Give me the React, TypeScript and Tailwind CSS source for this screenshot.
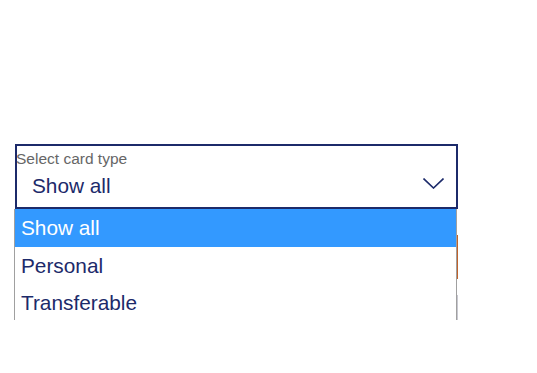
export default function App() {
  const options = ["Show all", "Personal", "Transferable"];
  return (
    <div
      className="w-[537px] h-[373px] bg-white pt-[144px] pl-[14px]"
      style={{ fontFamily: '"Liberation Sans", Arial, sans-serif' }}
    >
      <div className="relative w-[444px]">
        {/* Select box */}
        <div className="ml-[1px] w-[443px] h-[65px] border-2 border-[#1c2a6a] flex flex-col">
          <span className="ml-[-1px] mt-[4px] text-[15.5px] leading-[18px] text-[#666666]">
            Select card type
          </span>
          <div className="flex items-center justify-between pl-[15px] pr-[12px] mt-[6px]">
            <span className="text-[20.8px] leading-[24px] text-[#1c2a6a]">Show all</span>
            <svg width="21" height="11" viewBox="0 0 21 11" fill="none" className="mt-[-6px]">
              <path d="M0.5 0.5L10.5 10L20.5 0.5" stroke="#1c2a6a" strokeWidth="1.6" />
            </svg>
          </div>
        </div>

        {/* Options list */}
        <div className="relative w-[443px] h-[111px] overflow-hidden border-x border-[#a0a0a0] bg-white">
          {options.map((o, i) => (
            <div
              key={o}
              className={
                i === 0
                  ? "h-[38px] flex items-center pl-[6px] bg-[#3399ff] text-white text-[20.8px]"
                  : "h-[37px] flex items-center pl-[6px] text-[#1c2a6a] text-[20.8px]"
              }
            >
              {o}
            </div>
          ))}
        </div>
        <div className="absolute left-[443px] top-[91px] w-[1px] h-[44px] bg-[#c0622a]" />
        <div className="absolute left-[443px] top-[151px] w-[1px] h-[25px] bg-[#c8c8d0]" />
      </div>
    </div>
  );
}
